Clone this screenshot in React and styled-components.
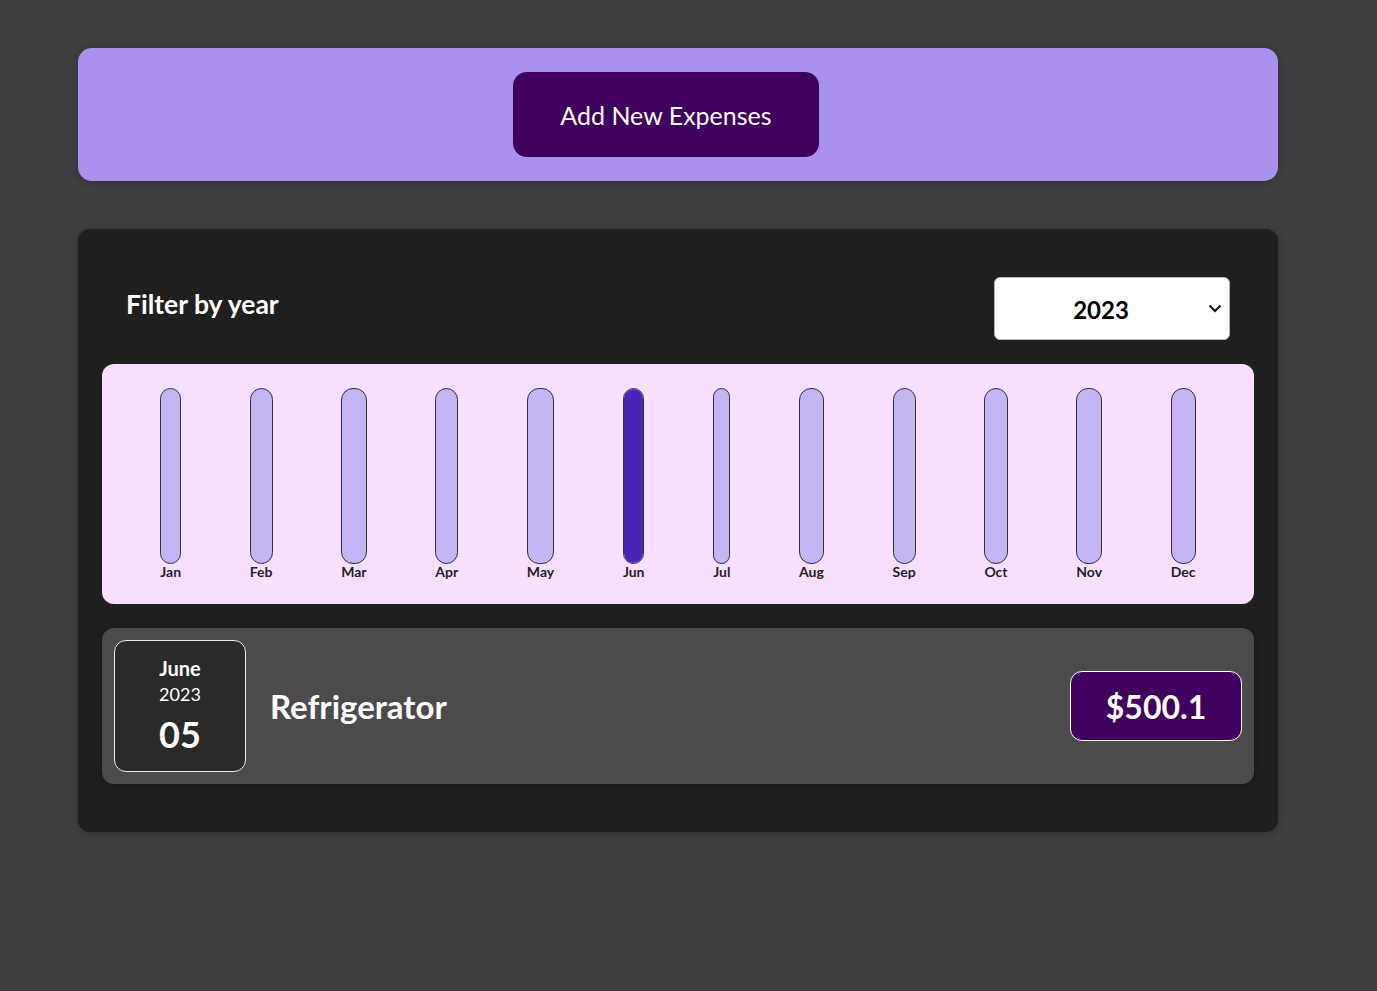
import React from 'react'
import styled, { createGlobalStyle } from 'styled-components'

const GlobalStyle = createGlobalStyle`
  * { box-sizing: border-box; }
  html, body {
    margin: 0;
    background-color: #3f3f3f;
    font-family: 'Lato', 'Noto Sans', sans-serif;
  }
`

const months = ['Jan', 'Feb', 'Mar', 'Apr', 'May', 'Jun', 'Jul', 'Aug', 'Sep', 'Oct', 'Nov', 'Dec']

const expenses = [
  { id: 'e1', title: 'Refrigerator', amount: 500.1, month: 'June', year: 2023, day: '05' },
]

const App = () => {
  const maxValue = 500.1
  const values = months.map((m, i) => (i === 5 ? 500.1 : 0))

  return (
    <>
      <GlobalStyle />
      <Page>
        <NewExpense>
          <AddButton>Add New Expenses</AddButton>
        </NewExpense>

        <Expenses>
          <FilterRow>
            <FilterLabel>Filter by year</FilterLabel>
            <SelectWrap>
              <YearSelect defaultValue="2023">
                <option value="2024">2024</option>
                <option value="2023">2023</option>
                <option value="2022">2022</option>
                <option value="2021">2021</option>
              </YearSelect>
              <Chevron width="14" height="9" viewBox="0 0 14 9">
                <polyline points="1.5,1.5 7,7 12.5,1.5" fill="none" stroke="#111" strokeWidth="2" />
              </Chevron>
            </SelectWrap>
          </FilterRow>

          <Chart>
            {months.map((m, i) => (
              <BarColumn key={m}>
                <BarInner>
                  <BarFill style={{ height: Math.round((values[i] / maxValue) * 100) + '%' }} />
                </BarInner>
                <BarLabel>{m}</BarLabel>
              </BarColumn>
            ))}
          </Chart>

          {expenses.map((e) => (
            <ExpenseItem key={e.id}>
              <DateBox>
                <DateMonth>{e.month}</DateMonth>
                <DateYear>{e.year}</DateYear>
                <DateDay>{e.day}</DateDay>
              </DateBox>
              <ExpenseTitle>{e.title}</ExpenseTitle>
              <Price>${e.amount}</Price>
            </ExpenseItem>
          ))}
        </Expenses>
      </Page>
    </>
  )
}

const Page = styled.div`
  width: 1200px;
  margin: 48px 0 0 78px;
  padding-bottom: 48px;
`

const NewExpense = styled.div`
  background-color: #a892ee;
  border-radius: 14px;
  padding: 24px 48px 24px 24px;
  display: flex;
  justify-content: center;
  box-shadow: 0 1px 8px rgba(0, 0, 0, 0.25);
`

const AddButton = styled.button`
  width: 306px;
  height: 85px;
  border: none;
  border-radius: 14px;
  background-color: #40005d;
  color: white;
  font-family: inherit;
  font-size: 25px;
  cursor: pointer;
`

const Expenses = styled.div`
  margin-top: 48px;
  background-color: #1f1f1f;
  border-radius: 12px;
  padding: 24px 24px 48px;
  box-shadow: 0 1px 8px rgba(0, 0, 0, 0.25);
`

const FilterRow = styled.div`
  display: flex;
  justify-content: space-between;
  align-items: center;
  padding: 24px 24px 0;
  margin-bottom: 24px;
`

const FilterLabel = styled.label`
  color: white;
  font-weight: bold;
  font-size: 26.5px;
  margin-top: -10px;
`

const SelectWrap = styled.div`
  position: relative;
  width: 236px;
  height: 63px;
`

const YearSelect = styled.select`
  appearance: none;
  width: 100%;
  height: 100%;
  border: 1px solid #b8b8b8;
  border-radius: 6px;
  background-color: white;
  color: black;
  font-family: inherit;
  font-size: 24px;
  font-weight: bold;
  text-align: center;
  padding: 2px 34px 0 12px;
  outline: none;
`

const Chevron = styled.svg`
  position: absolute;
  right: 8px;
  top: 27px;
  pointer-events: none;
`

const Chart = styled.div`
  background-color: #f8dfff;
  border-radius: 12px;
  padding: 24px;
  height: 240px;
  display: flex;
  justify-content: space-around;
`

const BarColumn = styled.div`
  height: 100%;
  display: flex;
  flex-direction: column;
  align-items: center;
`

const BarInner = styled.div`
  flex: 1;
  width: 100%;
  border: 1px solid #313131;
  border-radius: 12px;
  background-color: #c3b4f3;
  overflow: hidden;
  display: flex;
  flex-direction: column;
  justify-content: flex-end;
`

const BarFill = styled.div`
  width: 100%;
  background-color: #4826b9;
`

const BarLabel = styled.div`
  font-size: 14px;
  font-weight: bold;
  color: #1f1f1f;
  line-height: 16px;
`

const ExpenseItem = styled.div`
  margin-top: 24px;
  display: flex;
  align-items: center;
  padding: 12px;
  background-color: #4b4b4b;
  border-radius: 12px;
  box-shadow: 0 1px 8px rgba(0, 0, 0, 0.25);
`

const DateBox = styled.div`
  width: 132px;
  height: 132px;
  padding-top: 4px;
  display: flex;
  flex-direction: column;
  align-items: center;
  justify-content: center;
  border: 1px solid #ececec;
  border-radius: 12px;
  background-color: #2a2a2a;
  color: white;
`

const DateMonth = styled.div`
  font-size: 20px;
  font-weight: bold;
  line-height: 26px;
`

const DateYear = styled.div`
  font-size: 18px;
  line-height: 26px;
`

const DateDay = styled.div`
  font-size: 36px;
  font-weight: bold;
  line-height: 54px;
`

const ExpenseTitle = styled.h2`
  flex: 1;
  margin: 0 24px;
  color: white;
  font-size: 33px;
  font-weight: bold;
`

const Price = styled.div`
  width: 172px;
  height: 70px;
  display: flex;
  align-items: center;
  justify-content: center;
  font-size: 32px;
  font-weight: bold;
  color: white;
  background-color: #40005d;
  border: 1px solid white;
  border-radius: 12px;
`

export default App
